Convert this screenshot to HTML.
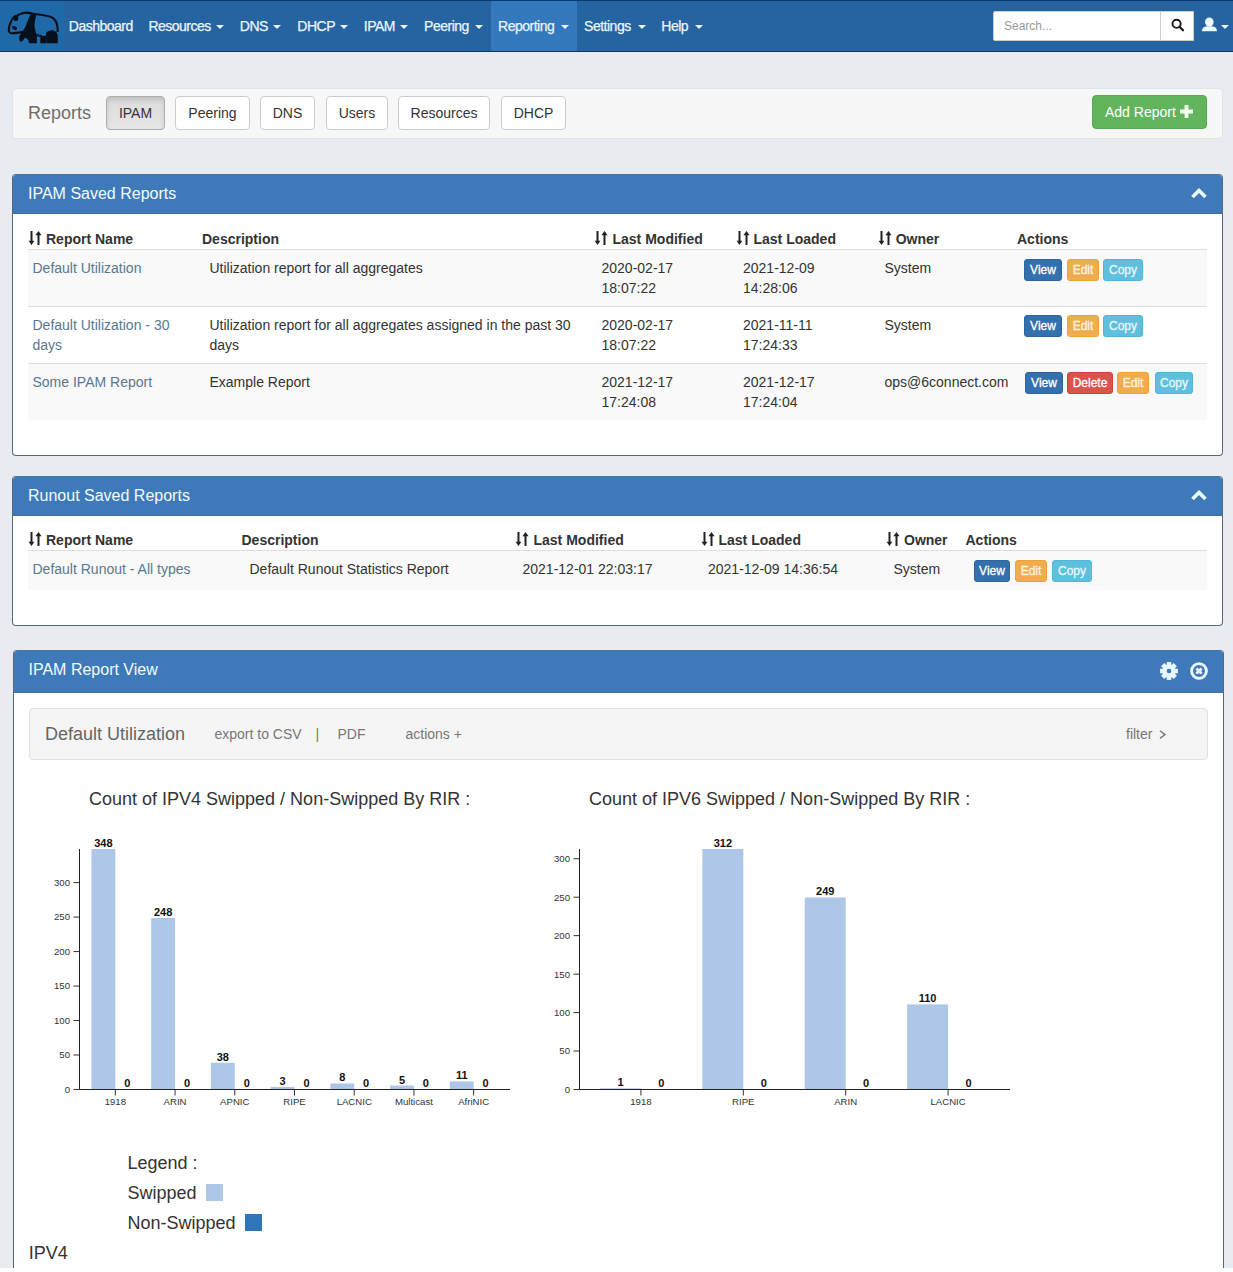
<!DOCTYPE html><html><head><meta charset="utf-8"><style>
*{box-sizing:border-box}
html,body{margin:0;padding:0}
body{width:1233px;height:1272px;position:relative;overflow:hidden;background:#fff;font-family:"Liberation Sans",sans-serif;color:#333}
.a{position:absolute}
.t{position:absolute;white-space:pre;line-height:20px}
.btn{position:absolute;background:#fff;border:1px solid #ccc;border-radius:4px;font-size:14px;color:#333;text-align:center;line-height:32px;height:34px}
.xs{position:absolute;height:22px;line-height:20px;font-size:12px;color:#fff;border-radius:3px;text-align:center;border:1px solid transparent;-webkit-text-stroke:0.3px currentColor}
.bv{background:#3470ad;border-color:#2e64a0}
.be{background:#f0ad4e;border-color:#eea236;color:#fdf3e3}
.bc{background:#5fc0de;border-color:#4fb8d8;color:#eaf7fc}
.bd{background:#d9534f;border-color:#d43f3a}
.panel{position:absolute;background:#fff;border:1px solid #56687a;border-color:#4a76a3 #56687a #56687a #56687a;border-radius:4px;overflow:hidden}
.ph{position:absolute;left:0;top:0;right:0;background:#3e7ab9;border-bottom:1px solid #44709c}
</style></head><body>
<div class="a" style="left:0px;top:0px;width:1233px;height:1268px;background:#e8ecf0"></div>
<div class="a" style="left:0px;top:0px;width:1233px;height:52px;background:#2564a0;border-top:1px solid #0b3a70;border-bottom:1px solid #133560"></div>
<div class="a" style="left:0px;top:1px;width:64px;height:50px;background:#1f69a9"></div>
<svg class="a" style="left:0;top:0" width="64" height="51" viewBox="0 0 64 51">
<g fill="none" stroke="#06101c" stroke-width="2.1">
<path d="M17,15.5 C20,14 23,12.6 26,12.6 C29,12.6 32,13.6 36,14.2 C42,14.8 49,15.4 53,18.2 C57,21.2 58,26 57.6,32"/>
<path d="M14.5,16.5 C11.5,19.5 9.5,24 8.8,29 C8.5,31.6 9.6,33 11.6,33.2 C15,33.3 20,32.4 23.8,31.6"/>
<path d="M36.5,34.6 C38,35.6 40,36 42,36"/>
</g>
<g fill="#06101c">
<ellipse cx="15.8" cy="18" rx="2.6" ry="2.9"/>
<ellipse cx="14.6" cy="28" rx="2.7" ry="1.8" transform="rotate(28 14.6 28)"/>
<path d="M31,13.4 L36.3,14 C35.8,18 34.4,22 34.5,26 C34.7,30 36.6,33 36.9,36 L36.9,43.2 L29,43.2 L28.6,40.2 C27.5,38.8 26,38.2 24.8,37.8 C23.8,39.5 22.8,41.5 21,41.8 C19.5,41.6 19.1,39.5 19.2,37.5 C19.5,35.2 20.5,33.8 21.8,32.4 C24.5,29.5 25.8,26 27.2,22 C28.5,18.5 29.8,15.5 31,13.4Z"/>
<path d="M40.3,36.2 L46.6,35.6 L46.8,43.2 L40.3,43.2Z"/>
<path d="M46,33.5 C47,31 50,30.2 53,30.4 C56.5,30.8 57.9,33.8 57.8,37.5 L57.8,43.2 L47.2,43.2 L46.6,39Z"/>
</g>
</svg>
<div class="a" style="left:491px;top:1px;width:86px;height:50px;background:#3479be"></div>
<div class="t" style="left:68.8px;top:16.15px;font-size:14px;color:#eaf5ff;font-weight:normal;letter-spacing:-0.5px;-webkit-text-stroke:0.25px currentColor">Dashboard</div>
<div class="t" style="left:148.4px;top:16.15px;font-size:14px;color:#eaf5ff;font-weight:normal;letter-spacing:-0.5px;-webkit-text-stroke:0.25px currentColor">Resources</div>
<div class="t" style="left:239.8px;top:16.15px;font-size:14px;color:#eaf5ff;font-weight:normal;letter-spacing:-0.5px;-webkit-text-stroke:0.25px currentColor">DNS</div>
<div class="t" style="left:297.3px;top:16.15px;font-size:14px;color:#eaf5ff;font-weight:normal;letter-spacing:-0.5px;-webkit-text-stroke:0.25px currentColor">DHCP</div>
<div class="t" style="left:363.8px;top:16.15px;font-size:14px;color:#eaf5ff;font-weight:normal;letter-spacing:-0.5px;-webkit-text-stroke:0.25px currentColor">IPAM</div>
<div class="t" style="left:424.1px;top:16.15px;font-size:14px;color:#eaf5ff;font-weight:normal;letter-spacing:-0.5px;-webkit-text-stroke:0.25px currentColor">Peering</div>
<div class="t" style="left:498.1px;top:16.15px;font-size:14px;color:#eaf5ff;font-weight:normal;letter-spacing:-0.5px;-webkit-text-stroke:0.25px currentColor">Reporting</div>
<div class="t" style="left:584.0999999999999px;top:16.15px;font-size:14px;color:#eaf5ff;font-weight:normal;letter-spacing:-0.5px;-webkit-text-stroke:0.25px currentColor">Settings</div>
<div class="t" style="left:661.3px;top:16.15px;font-size:14px;color:#eaf5ff;font-weight:normal;letter-spacing:-0.5px;-webkit-text-stroke:0.25px currentColor">Help</div>
<div class="a" style="left:216px;top:25px;width:0px;height:0px;border-left:4px solid transparent;border-right:4px solid transparent;border-top:4px solid #eaf5ff"></div>
<div class="a" style="left:273px;top:25px;width:0px;height:0px;border-left:4px solid transparent;border-right:4px solid transparent;border-top:4px solid #eaf5ff"></div>
<div class="a" style="left:340px;top:25px;width:0px;height:0px;border-left:4px solid transparent;border-right:4px solid transparent;border-top:4px solid #eaf5ff"></div>
<div class="a" style="left:400px;top:25px;width:0px;height:0px;border-left:4px solid transparent;border-right:4px solid transparent;border-top:4px solid #eaf5ff"></div>
<div class="a" style="left:475px;top:25px;width:0px;height:0px;border-left:4px solid transparent;border-right:4px solid transparent;border-top:4px solid #eaf5ff"></div>
<div class="a" style="left:561px;top:25px;width:0px;height:0px;border-left:4px solid transparent;border-right:4px solid transparent;border-top:4px solid #eaf5ff"></div>
<div class="a" style="left:638px;top:25px;width:0px;height:0px;border-left:4px solid transparent;border-right:4px solid transparent;border-top:4px solid #eaf5ff"></div>
<div class="a" style="left:695px;top:25px;width:0px;height:0px;border-left:4px solid transparent;border-right:4px solid transparent;border-top:4px solid #eaf5ff"></div>
<div class="a" style="left:993px;top:11px;width:168px;height:30px;background:#fff;border:1px solid #ccc;border-radius:2px 0 0 2px"></div>
<div class="t" style="left:1004px;top:15.84px;font-size:12px;color:#999;font-weight:normal;">Search...</div>
<div class="a" style="left:1160px;top:11px;width:34px;height:30px;background:#fff;border:1px solid #ccc;border-radius:0"></div>
<svg class="a" style="left:1171px;top:18px" width="14" height="14" viewBox="0 0 14 14"><circle cx="5.6" cy="5.8" r="4.1" fill="none" stroke="#1a1a1a" stroke-width="1.9"/><path d="M8.6,8.9 L12,12.3" stroke="#1a1a1a" stroke-width="2.2" stroke-linecap="round"/></svg>
<svg class="a" style="left:1201px;top:17px" width="17" height="16" viewBox="0 0 17 16"><ellipse cx="8.3" cy="5" rx="4.3" ry="4.6" fill="#eaf8ff"/><path d="M0.8,14.2 C1,11 3,9.6 6,9.3 L11,9.3 C14,9.6 15.8,11 16,14.2Z" fill="#eaf8ff"/></svg>
<div class="a" style="left:1221px;top:25px;width:0px;height:0px;border-left:4px solid transparent;border-right:4px solid transparent;border-top:4px solid #eaf5ff"></div>
<div class="a" style="left:12px;top:88px;width:1211px;height:51px;background:#f7f7f7;border:1px solid #e1e3e5;border-radius:4px"></div>
<div class="t" style="left:28px;top:102.76px;font-size:18px;color:#6e6e6e;font-weight:normal;">Reports</div>
<div class="btn" style="left:106px;top:96px;width:59px;background:linear-gradient(#dcdcdc,#e6e6e6);border-color:#adadad;box-shadow:inset 0 3px 5px rgba(0,0,0,.125);">IPAM</div>
<div class="btn" style="left:175px;top:96px;width:75px;">Peering</div>
<div class="btn" style="left:260px;top:96px;width:55px;">DNS</div>
<div class="btn" style="left:326px;top:96px;width:62px;">Users</div>
<div class="btn" style="left:398px;top:96px;width:92px;">Resources</div>
<div class="btn" style="left:501px;top:96px;width:65px;">DHCP</div>
<div class="btn" style="left:1092px;top:95px;width:115px;height:34px;background:#62b55d;border-color:#58ab53;color:#fff;text-align:left;padding-left:12px">Add Report</div>
<svg class="a" style="left:1180px;top:105px" width="13" height="13" viewBox="0 0 13 13"><path d="M4.6,0H8.4V4.6H13V8.4H8.4V13H4.6V8.4H0V4.6H4.6Z" fill="#f4fff0"/></svg>
<div class="panel" style="left:12px;top:174px;width:1211px;height:282px"><div class="ph" style="height:39px"></div></div>
<div class="t" style="left:28px;top:183.95px;font-size:16px;color:#f4faff;font-weight:normal;">IPAM Saved Reports</div>
<svg class="a" style="left:1191px;top:188px" width="16" height="11" viewBox="0 0 16 11"><path d="M1.5,9 L8,2.5 L14.5,9" fill="none" stroke="#eaf8ff" stroke-width="3.6"/></svg>
<svg class="a" style="left:28px;top:231px" width="15" height="15" viewBox="0 0 15 15"><path d="M3.5,0V10.5M10.5,14V3.5" stroke="#222" stroke-width="2"/><path d="M0.6,9.8H6.4L3.5,14Z M7.4,4.2H13.6L10.5,0Z" fill="#222"/></svg>
<div class="t" style="left:46px;top:228.65px;font-size:14px;color:#333;font-weight:bold;">Report Name</div>
<div class="t" style="left:202.0px;top:228.65px;font-size:14px;color:#333;font-weight:bold;">Description</div>
<svg class="a" style="left:594px;top:231px" width="15" height="15" viewBox="0 0 15 15"><path d="M3.5,0V10.5M10.5,14V3.5" stroke="#222" stroke-width="2"/><path d="M0.6,9.8H6.4L3.5,14Z M7.4,4.2H13.6L10.5,0Z" fill="#222"/></svg>
<div class="t" style="left:612.5px;top:228.65px;font-size:14px;color:#333;font-weight:bold;">Last Modified</div>
<svg class="a" style="left:736px;top:231px" width="15" height="15" viewBox="0 0 15 15"><path d="M3.5,0V10.5M10.5,14V3.5" stroke="#222" stroke-width="2"/><path d="M0.6,9.8H6.4L3.5,14Z M7.4,4.2H13.6L10.5,0Z" fill="#222"/></svg>
<div class="t" style="left:753.5px;top:228.65px;font-size:14px;color:#333;font-weight:bold;">Last Loaded</div>
<svg class="a" style="left:878px;top:231px" width="15" height="15" viewBox="0 0 15 15"><path d="M3.5,0V10.5M10.5,14V3.5" stroke="#222" stroke-width="2"/><path d="M0.6,9.8H6.4L3.5,14Z M7.4,4.2H13.6L10.5,0Z" fill="#222"/></svg>
<div class="t" style="left:895.7px;top:228.65px;font-size:14px;color:#333;font-weight:bold;">Owner</div>
<div class="t" style="left:1017.0px;top:228.65px;font-size:14px;color:#333;font-weight:bold;">Actions</div>
<div class="a" style="left:28px;top:249px;width:1179px;height:1px;background:#ddd"></div>
<div class="a" style="left:28px;top:250px;width:1179px;height:56px;background:#f9f9f9"></div>
<div class="a" style="left:28px;top:306px;width:1179px;height:1px;background:#ddd"></div>
<div class="a" style="left:28px;top:363px;width:1179px;height:1px;background:#ddd"></div>
<div class="a" style="left:28px;top:364px;width:1179px;height:56px;background:#f9f9f9"></div>
<div class="t" style="left:32.5px;top:257.65px;font-size:14px;color:#587892;font-weight:normal;">Default Utilization</div>
<div class="t" style="left:209.5px;top:257.65px;font-size:14px;color:#333;font-weight:normal;">Utilization report for all aggregates</div>
<div class="t" style="left:601.5px;top:257.65px;font-size:14px;color:#333;font-weight:normal;">2020-02-17</div>
<div class="t" style="left:601.5px;top:277.65px;font-size:14px;color:#333;font-weight:normal;">18:07:22</div>
<div class="t" style="left:743px;top:257.65px;font-size:14px;color:#333;font-weight:normal;">2021-12-09</div>
<div class="t" style="left:743px;top:277.65px;font-size:14px;color:#333;font-weight:normal;">14:28:06</div>
<div class="t" style="left:884.5px;top:257.65px;font-size:14px;color:#333;font-weight:normal;">System</div>
<div class="t" style="left:32.5px;top:315.15px;font-size:14px;color:#587892;font-weight:normal;">Default Utilization - 30</div>
<div class="t" style="left:32.5px;top:335.15px;font-size:14px;color:#587892;font-weight:normal;">days</div>
<div class="t" style="left:209.5px;top:315.15px;font-size:14px;color:#333;font-weight:normal;">Utilization report for all aggregates assigned in the past 30</div>
<div class="t" style="left:209.5px;top:335.15px;font-size:14px;color:#333;font-weight:normal;">days</div>
<div class="t" style="left:601.5px;top:315.15px;font-size:14px;color:#333;font-weight:normal;">2020-02-17</div>
<div class="t" style="left:601.5px;top:335.15px;font-size:14px;color:#333;font-weight:normal;">18:07:22</div>
<div class="t" style="left:743px;top:315.15px;font-size:14px;color:#333;font-weight:normal;">2021-11-11</div>
<div class="t" style="left:743px;top:335.15px;font-size:14px;color:#333;font-weight:normal;">17:24:33</div>
<div class="t" style="left:884.5px;top:315.15px;font-size:14px;color:#333;font-weight:normal;">System</div>
<div class="t" style="left:32.5px;top:372.15px;font-size:14px;color:#587892;font-weight:normal;">Some IPAM Report</div>
<div class="t" style="left:209.5px;top:372.15px;font-size:14px;color:#333;font-weight:normal;">Example Report</div>
<div class="t" style="left:601.5px;top:372.15px;font-size:14px;color:#333;font-weight:normal;">2021-12-17</div>
<div class="t" style="left:601.5px;top:392.15px;font-size:14px;color:#333;font-weight:normal;">17:24:08</div>
<div class="t" style="left:743px;top:372.15px;font-size:14px;color:#333;font-weight:normal;">2021-12-17</div>
<div class="t" style="left:743px;top:392.15px;font-size:14px;color:#333;font-weight:normal;">17:24:04</div>
<div class="t" style="left:884.5px;top:372.15px;font-size:14px;color:#333;font-weight:normal;">ops@6connect.com</div>
<div class="xs bv" style="left:1024px;top:259px;width:38px">View</div>
<div class="xs be" style="left:1067px;top:259px;width:32px">Edit</div>
<div class="xs bc" style="left:1103px;top:259px;width:40px">Copy</div>
<div class="xs bv" style="left:1024px;top:315px;width:38px">View</div>
<div class="xs be" style="left:1067px;top:315px;width:32px">Edit</div>
<div class="xs bc" style="left:1103px;top:315px;width:40px">Copy</div>
<div class="xs bv" style="left:1025px;top:372px;width:38px">View</div>
<div class="xs bd" style="left:1067px;top:372px;width:46px">Delete</div>
<div class="xs be" style="left:1117px;top:372px;width:32px">Edit</div>
<div class="xs bc" style="left:1155px;top:372px;width:38px">Copy</div>
<div class="panel" style="left:12px;top:476px;width:1211px;height:150px"><div class="ph" style="height:39px"></div></div>
<div class="t" style="left:28px;top:485.95px;font-size:16px;color:#f4faff;font-weight:normal;">Runout Saved Reports</div>
<svg class="a" style="left:1191px;top:490px" width="16" height="11" viewBox="0 0 16 11"><path d="M1.5,9 L8,2.5 L14.5,9" fill="none" stroke="#eaf8ff" stroke-width="3.6"/></svg>
<svg class="a" style="left:28px;top:532px" width="15" height="15" viewBox="0 0 15 15"><path d="M3.5,0V10.5M10.5,14V3.5" stroke="#222" stroke-width="2"/><path d="M0.6,9.8H6.4L3.5,14Z M7.4,4.2H13.6L10.5,0Z" fill="#222"/></svg>
<div class="t" style="left:46px;top:530.15px;font-size:14px;color:#333;font-weight:bold;">Report Name</div>
<div class="t" style="left:241.5px;top:530.15px;font-size:14px;color:#333;font-weight:bold;">Description</div>
<svg class="a" style="left:515px;top:532px" width="15" height="15" viewBox="0 0 15 15"><path d="M3.5,0V10.5M10.5,14V3.5" stroke="#222" stroke-width="2"/><path d="M0.6,9.8H6.4L3.5,14Z M7.4,4.2H13.6L10.5,0Z" fill="#222"/></svg>
<div class="t" style="left:533.5px;top:530.15px;font-size:14px;color:#333;font-weight:bold;">Last Modified</div>
<svg class="a" style="left:701px;top:532px" width="15" height="15" viewBox="0 0 15 15"><path d="M3.5,0V10.5M10.5,14V3.5" stroke="#222" stroke-width="2"/><path d="M0.6,9.8H6.4L3.5,14Z M7.4,4.2H13.6L10.5,0Z" fill="#222"/></svg>
<div class="t" style="left:718.5px;top:530.15px;font-size:14px;color:#333;font-weight:bold;">Last Loaded</div>
<svg class="a" style="left:886px;top:532px" width="15" height="15" viewBox="0 0 15 15"><path d="M3.5,0V10.5M10.5,14V3.5" stroke="#222" stroke-width="2"/><path d="M0.6,9.8H6.4L3.5,14Z M7.4,4.2H13.6L10.5,0Z" fill="#222"/></svg>
<div class="t" style="left:904px;top:530.15px;font-size:14px;color:#333;font-weight:bold;">Owner</div>
<div class="t" style="left:965.5px;top:530.15px;font-size:14px;color:#333;font-weight:bold;">Actions</div>
<div class="a" style="left:28px;top:550px;width:1179px;height:1px;background:#ddd"></div>
<div class="a" style="left:28px;top:551px;width:1179px;height:39px;background:#f9f9f9"></div>
<div class="t" style="left:32.5px;top:558.65px;font-size:14px;color:#587892;font-weight:normal;">Default Runout - All types</div>
<div class="t" style="left:249.5px;top:558.65px;font-size:14px;color:#333;font-weight:normal;">Default Runout Statistics Report</div>
<div class="t" style="left:522.5px;top:558.65px;font-size:14px;color:#333;font-weight:normal;">2021-12-01 22:03:17</div>
<div class="t" style="left:708px;top:558.65px;font-size:14px;color:#333;font-weight:normal;">2021-12-09 14:36:54</div>
<div class="t" style="left:893.5px;top:558.65px;font-size:14px;color:#333;font-weight:normal;">System</div>
<div class="xs bv" style="left:974px;top:560px;width:36px">View</div>
<div class="xs be" style="left:1015px;top:560px;width:32px">Edit</div>
<div class="xs bc" style="left:1052px;top:560px;width:40px">Copy</div>
<div class="panel" style="left:13px;top:650px;width:1211px;height:640px"><div class="ph" style="height:42px"></div></div>
<div class="t" style="left:28.5px;top:659.95px;font-size:16px;color:#f4faff;font-weight:normal;">IPAM Report View</div>
<svg class="a" style="left:1159px;top:661px" width="20" height="20" viewBox="-10 -10 20 20"><g fill="#eaf8ff"><rect x="-2.3" y="-8.9" width="4.6" height="5" transform="rotate(0)"/><rect x="-2.3" y="-8.9" width="4.6" height="5" transform="rotate(45)"/><rect x="-2.3" y="-8.9" width="4.6" height="5" transform="rotate(90)"/><rect x="-2.3" y="-8.9" width="4.6" height="5" transform="rotate(135)"/><rect x="-2.3" y="-8.9" width="4.6" height="5" transform="rotate(180)"/><rect x="-2.3" y="-8.9" width="4.6" height="5" transform="rotate(225)"/><rect x="-2.3" y="-8.9" width="4.6" height="5" transform="rotate(270)"/><rect x="-2.3" y="-8.9" width="4.6" height="5" transform="rotate(315)"/><circle r="6.6"/></g><circle r="2.3" fill="#3c7ab9"/></svg>
<svg class="a" style="left:1189px;top:661px" width="20" height="20" viewBox="-10 -10 20 20"><circle r="7.4" fill="none" stroke="#eaf8ff" stroke-width="2.9"/><path d="M-2.6,-2.6L2.6,2.6M2.6,-2.6L-2.6,2.6" stroke="#eaf8ff" stroke-width="2.8"/></svg>
<div class="a" style="left:29px;top:708px;width:1179px;height:52px;background:#f5f5f5;border:1px solid #e1e1e1;border-radius:4px"></div>
<div class="t" style="left:45px;top:723.76px;font-size:18px;color:#666;font-weight:normal;">Default Utilization</div>
<div class="t" style="left:214.5px;top:723.65px;font-size:14px;color:#777;font-weight:normal;">export to CSV</div>
<div class="t" style="left:315.5px;top:723.65px;font-size:14px;color:#777;font-weight:normal;">|</div>
<div class="t" style="left:337.5px;top:723.65px;font-size:14px;color:#777;font-weight:normal;">PDF</div>
<div class="t" style="left:405.5px;top:723.65px;font-size:14px;color:#777;font-weight:normal;">actions +</div>
<div class="t" style="left:1126px;top:724.15px;font-size:14px;color:#777;font-weight:normal;">filter</div>
<svg class="a" style="left:1159px;top:730px" width="8" height="10" viewBox="0 0 8 10"><path d="M1,0.8 L6,4.6 L1,8.4" fill="none" stroke="#777" stroke-width="1.4"/></svg>
<div class="t" style="left:89px;top:788.76px;font-size:18px;color:#333;font-weight:normal;">Count of IPV4 Swipped / Non-Swipped By RIR :</div>
<div class="t" style="left:589px;top:788.76px;font-size:18px;color:#333;font-weight:normal;">Count of IPV6 Swipped / Non-Swipped By RIR :</div>
<svg class="a" style="left:0;top:0" width="1233" height="1272"><rect x="91.44" y="849.00" width="23.89" height="240.00" fill="#aec7e8"/><text x="103.39" y="847.00" text-anchor="middle" font-size="11" font-weight="bold" fill="#111">348</text><text x="127.28" y="1087.00" text-anchor="middle" font-size="11" font-weight="bold" fill="#111">0</text><line x1="115.33" y1="1089.0" x2="115.33" y2="1095.5" stroke="#333" stroke-width="1"/><text x="115.33" y="1105.0" text-anchor="middle" font-size="9.6" fill="#333">1918</text><rect x="151.17" y="917.97" width="23.89" height="171.03" fill="#aec7e8"/><text x="163.11" y="915.97" text-anchor="middle" font-size="11" font-weight="bold" fill="#111">248</text><text x="187.00" y="1087.00" text-anchor="middle" font-size="11" font-weight="bold" fill="#111">0</text><line x1="175.06" y1="1089.0" x2="175.06" y2="1095.5" stroke="#333" stroke-width="1"/><text x="175.06" y="1105.0" text-anchor="middle" font-size="9.6" fill="#333">ARIN</text><rect x="210.89" y="1062.79" width="23.89" height="26.21" fill="#aec7e8"/><text x="222.83" y="1060.79" text-anchor="middle" font-size="11" font-weight="bold" fill="#111">38</text><text x="246.72" y="1087.00" text-anchor="middle" font-size="11" font-weight="bold" fill="#111">0</text><line x1="234.78" y1="1089.0" x2="234.78" y2="1095.5" stroke="#333" stroke-width="1"/><text x="234.78" y="1105.0" text-anchor="middle" font-size="9.6" fill="#333">APNIC</text><rect x="270.61" y="1086.93" width="23.89" height="2.07" fill="#aec7e8"/><text x="282.56" y="1084.93" text-anchor="middle" font-size="11" font-weight="bold" fill="#111">3</text><text x="306.44" y="1087.00" text-anchor="middle" font-size="11" font-weight="bold" fill="#111">0</text><line x1="294.50" y1="1089.0" x2="294.50" y2="1095.5" stroke="#333" stroke-width="1"/><text x="294.50" y="1105.0" text-anchor="middle" font-size="9.6" fill="#333">RIPE</text><rect x="330.33" y="1083.48" width="23.89" height="5.52" fill="#aec7e8"/><text x="342.28" y="1081.48" text-anchor="middle" font-size="11" font-weight="bold" fill="#111">8</text><text x="366.17" y="1087.00" text-anchor="middle" font-size="11" font-weight="bold" fill="#111">0</text><line x1="354.22" y1="1089.0" x2="354.22" y2="1095.5" stroke="#333" stroke-width="1"/><text x="354.22" y="1105.0" text-anchor="middle" font-size="9.6" fill="#333">LACNIC</text><rect x="390.06" y="1085.55" width="23.89" height="3.45" fill="#aec7e8"/><text x="402.00" y="1083.55" text-anchor="middle" font-size="11" font-weight="bold" fill="#111">5</text><text x="425.89" y="1087.00" text-anchor="middle" font-size="11" font-weight="bold" fill="#111">0</text><line x1="413.94" y1="1089.0" x2="413.94" y2="1095.5" stroke="#333" stroke-width="1"/><text x="413.94" y="1105.0" text-anchor="middle" font-size="9.6" fill="#333">Multicast</text><rect x="449.78" y="1081.41" width="23.89" height="7.59" fill="#aec7e8"/><text x="461.72" y="1079.41" text-anchor="middle" font-size="11" font-weight="bold" fill="#111">11</text><text x="485.61" y="1087.00" text-anchor="middle" font-size="11" font-weight="bold" fill="#111">0</text><line x1="473.67" y1="1089.0" x2="473.67" y2="1095.5" stroke="#333" stroke-width="1"/><text x="473.67" y="1105.0" text-anchor="middle" font-size="9.6" fill="#333">AfriNIC</text><line x1="73.5" y1="1089.50" x2="79.5" y2="1089.50" stroke="#333" stroke-width="1"/><text x="70.0" y="1092.90" text-anchor="end" font-size="9.6" fill="#333">0</text><line x1="73.5" y1="1055.02" x2="79.5" y2="1055.02" stroke="#333" stroke-width="1"/><text x="70.0" y="1058.42" text-anchor="end" font-size="9.6" fill="#333">50</text><line x1="73.5" y1="1020.53" x2="79.5" y2="1020.53" stroke="#333" stroke-width="1"/><text x="70.0" y="1023.93" text-anchor="end" font-size="9.6" fill="#333">100</text><line x1="73.5" y1="986.05" x2="79.5" y2="986.05" stroke="#333" stroke-width="1"/><text x="70.0" y="989.45" text-anchor="end" font-size="9.6" fill="#333">150</text><line x1="73.5" y1="951.57" x2="79.5" y2="951.57" stroke="#333" stroke-width="1"/><text x="70.0" y="954.97" text-anchor="end" font-size="9.6" fill="#333">200</text><line x1="73.5" y1="917.09" x2="79.5" y2="917.09" stroke="#333" stroke-width="1"/><text x="70.0" y="920.49" text-anchor="end" font-size="9.6" fill="#333">250</text><line x1="73.5" y1="882.60" x2="79.5" y2="882.60" stroke="#333" stroke-width="1"/><text x="70.0" y="886.00" text-anchor="end" font-size="9.6" fill="#333">300</text><path d="M79.5,849.0V1089.5H510.0" fill="none" stroke="#222" stroke-width="1"/></svg>
<svg class="a" style="left:0;top:0" width="1233" height="1272"><rect x="599.98" y="1088.23" width="40.95" height="0.77" fill="#aec7e8"/><text x="620.45" y="1086.23" text-anchor="middle" font-size="11" font-weight="bold" fill="#111">1</text><text x="661.40" y="1087.00" text-anchor="middle" font-size="11" font-weight="bold" fill="#111">0</text><line x1="640.93" y1="1089.0" x2="640.93" y2="1095.5" stroke="#333" stroke-width="1"/><text x="640.93" y="1105.0" text-anchor="middle" font-size="9.6" fill="#333">1918</text><rect x="702.36" y="849.00" width="40.95" height="240.00" fill="#aec7e8"/><text x="722.83" y="847.00" text-anchor="middle" font-size="11" font-weight="bold" fill="#111">312</text><text x="763.79" y="1087.00" text-anchor="middle" font-size="11" font-weight="bold" fill="#111">0</text><line x1="743.31" y1="1089.0" x2="743.31" y2="1095.5" stroke="#333" stroke-width="1"/><text x="743.31" y="1105.0" text-anchor="middle" font-size="9.6" fill="#333">RIPE</text><rect x="804.74" y="897.46" width="40.95" height="191.54" fill="#aec7e8"/><text x="825.21" y="895.46" text-anchor="middle" font-size="11" font-weight="bold" fill="#111">249</text><text x="866.17" y="1087.00" text-anchor="middle" font-size="11" font-weight="bold" fill="#111">0</text><line x1="845.69" y1="1089.0" x2="845.69" y2="1095.5" stroke="#333" stroke-width="1"/><text x="845.69" y="1105.0" text-anchor="middle" font-size="9.6" fill="#333">ARIN</text><rect x="907.12" y="1004.38" width="40.95" height="84.62" fill="#aec7e8"/><text x="927.60" y="1002.38" text-anchor="middle" font-size="11" font-weight="bold" fill="#111">110</text><text x="968.55" y="1087.00" text-anchor="middle" font-size="11" font-weight="bold" fill="#111">0</text><line x1="948.07" y1="1089.0" x2="948.07" y2="1095.5" stroke="#333" stroke-width="1"/><text x="948.07" y="1105.0" text-anchor="middle" font-size="9.6" fill="#333">LACNIC</text><line x1="573.5" y1="1089.50" x2="579.5" y2="1089.50" stroke="#333" stroke-width="1"/><text x="570.0" y="1092.90" text-anchor="end" font-size="9.6" fill="#333">0</text><line x1="573.5" y1="1051.04" x2="579.5" y2="1051.04" stroke="#333" stroke-width="1"/><text x="570.0" y="1054.44" text-anchor="end" font-size="9.6" fill="#333">50</text><line x1="573.5" y1="1012.58" x2="579.5" y2="1012.58" stroke="#333" stroke-width="1"/><text x="570.0" y="1015.98" text-anchor="end" font-size="9.6" fill="#333">100</text><line x1="573.5" y1="974.12" x2="579.5" y2="974.12" stroke="#333" stroke-width="1"/><text x="570.0" y="977.52" text-anchor="end" font-size="9.6" fill="#333">150</text><line x1="573.5" y1="935.65" x2="579.5" y2="935.65" stroke="#333" stroke-width="1"/><text x="570.0" y="939.05" text-anchor="end" font-size="9.6" fill="#333">200</text><line x1="573.5" y1="897.19" x2="579.5" y2="897.19" stroke="#333" stroke-width="1"/><text x="570.0" y="900.59" text-anchor="end" font-size="9.6" fill="#333">250</text><line x1="573.5" y1="858.73" x2="579.5" y2="858.73" stroke="#333" stroke-width="1"/><text x="570.0" y="862.13" text-anchor="end" font-size="9.6" fill="#333">300</text><path d="M579.5,849.0V1089.5H1010.0" fill="none" stroke="#222" stroke-width="1"/></svg>
<div class="t" style="left:127.5px;top:1153.26px;font-size:18px;color:#333;font-weight:normal;">Legend :</div>
<div class="t" style="left:127.5px;top:1182.76px;font-size:18px;color:#333;font-weight:normal;">Swipped</div>
<div class="a" style="left:206px;top:1184px;width:17px;height:17px;background:#aec7e8"></div>
<div class="t" style="left:127.5px;top:1212.76px;font-size:18px;color:#333;font-weight:normal;">Non-Swipped</div>
<div class="a" style="left:245px;top:1214px;width:17px;height:17px;background:#2f76b4"></div>
<div class="t" style="left:28.8px;top:1242.76px;font-size:18px;color:#333;font-weight:normal;">IPV4</div>
<div class="a" style="left:0px;top:1268px;width:1233px;height:4px;background:#fff"></div>
</body></html>
